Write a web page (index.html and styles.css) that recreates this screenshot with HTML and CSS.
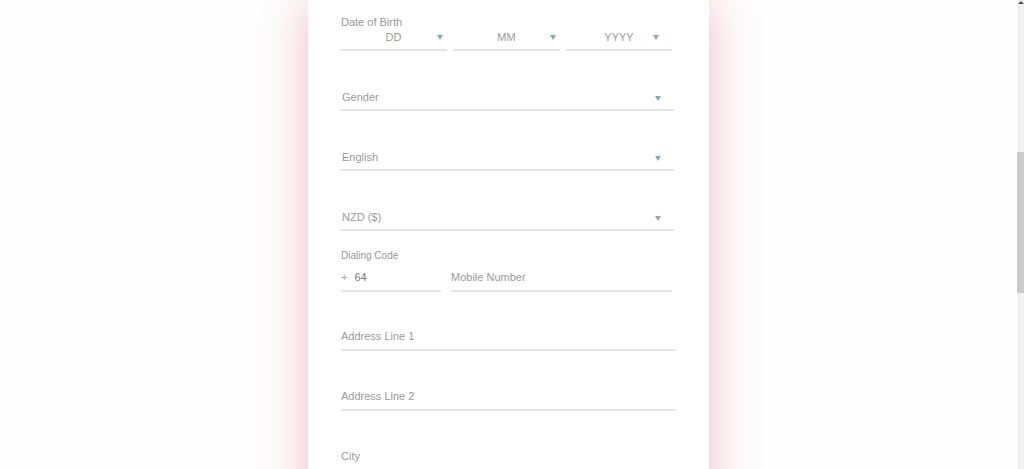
FILE: index.html
```html
<!DOCTYPE html>
<html lang="en">
<head>
<meta charset="utf-8">
<title>Register</title>
<link rel="stylesheet" href="styles.css">
</head>
<body>
<div class="page">
  <main class="stage">
    <form class="card">
      <div class="label dob-label">Date of Birth</div>
      <div class="dob">
        <div class="sel center"><span>DD</span><svg class="arrow a-near" viewBox="0 0 6 5"><polygon points="0,0 6,0 3,5"/></svg></div>
        <div class="sel center"><span>MM</span><svg class="arrow a-near" viewBox="0 0 6 5"><polygon points="0,0 6,0 3,5"/></svg></div>
        <div class="sel center"><span>YYYY</span><svg class="arrow a-far" viewBox="0 0 6 5"><polygon points="0,0 6,0 3,5"/></svg></div>
      </div>
      <div class="sel row"><span>Gender</span><svg class="arrow a-far" viewBox="0 0 6 5"><polygon points="0,0 6,0 3,5"/></svg></div>
      <div class="sel row"><span>English</span><svg class="arrow a-far" viewBox="0 0 6 5"><polygon points="0,0 6,0 3,5"/></svg></div>
      <div class="sel row"><span>NZD ($)</span><svg class="arrow a-far" viewBox="0 0 6 5"><polygon points="0,0 6,0 3,5"/></svg></div>
      <div class="label small dial-label">Dialing Code</div>
      <div class="phone">
        <div class="field code"><span class="plus">+</span><span class="val">64</span></div>
        <div class="field mobile">Mobile Number</div>
      </div>
      <div class="field addr first">Address Line 1</div>
      <div class="field addr">Address Line 2</div>
      <div class="field addr">City</div>
    </form>
  </main>
  <aside class="scrollbar">
    <div class="sb-arrow"></div>
    <div class="sb-thumb"></div>
  </aside>
</div>
</body>
</html>
```

FILE: styles.css
```css
html, body {
  margin: 0;
  padding: 0;
  height: 100%;
  overflow: hidden;
  background: #ffffff;
}
body {
  font-family: "Liberation Sans", Arial, sans-serif;
  font-size: 11px;
  color: #9a9a9a;
}
.page {
  display: flex;
  height: 469px;
}
.stage {
  flex: 1;
  display: flex;
  justify-content: center;
  background: #fefefe;
}
.card {
  width: 401px;
  box-sizing: border-box;
  background: #ffffff;
  padding: 16px 0 0 32px;
  box-shadow: 0 0 45px rgba(225, 110, 130, 0.45);
  height: 600px;
}
.label {
  line-height: 13px;
  color: #979797;
  margin-left: 1px;
}
.label.small {
  font-size: 10px;
  line-height: 14px;
}
.dob {
  display: grid;
  grid-template-columns: 107px 107px 106px;
  column-gap: 6px;
  width: 334px;
}
.sel {
  position: relative;
  line-height: 16px;
  border-bottom: 2px solid #e6e6e6;
}
.sel.center {
  text-align: center;
  padding: 0 0 4px 0;
}
.sel.row {
  width: 334px;
  padding: 38px 0 4px 2px;
  box-sizing: border-box;
}
.arrow {
  position: absolute;
  width: 6px;
  height: 5px;
  fill: #8ea6b2;
}
.sel.center .arrow { bottom: 9px; }
.sel.row .arrow { bottom: 8px; }
.a-near { right: 4px; }
.a-far { right: 13px; }
.dial-label {
  margin-top: 18px;
}
.phone {
  display: flex;
  gap: 10px;
  margin-left: 1px;
}
.field {
  line-height: 16px;
  border-bottom: 2px solid #e6e6e6;
}
.phone .field {
  padding: 6px 0 5px 0;
}
.code {
  width: 100px;
  display: flex;
  gap: 7px;
}
.plus { color: #a3a3a3; }
.val { color: #7a7a7a; }
.mobile {
  width: 221px;
}
.addr {
  width: 335px;
  margin-left: 1px;
  padding: 37px 0 5px 0;
}
.addr.first {
  padding-top: 36px;
}
.scrollbar {
  width: 7px;
  background: #f0f0f0;
  display: flex;
  flex-direction: column;
  align-items: center;
}
.sb-arrow {
  width: 0;
  height: 0;
  border-left: 3px solid transparent;
  border-right: 3px solid transparent;
  border-bottom: 3px solid #505050;
  margin-top: 1px;
}
.sb-thumb {
  width: 7px;
  height: 141px;
  margin-top: 148px;
  background: #cdcdcd;
}
```
